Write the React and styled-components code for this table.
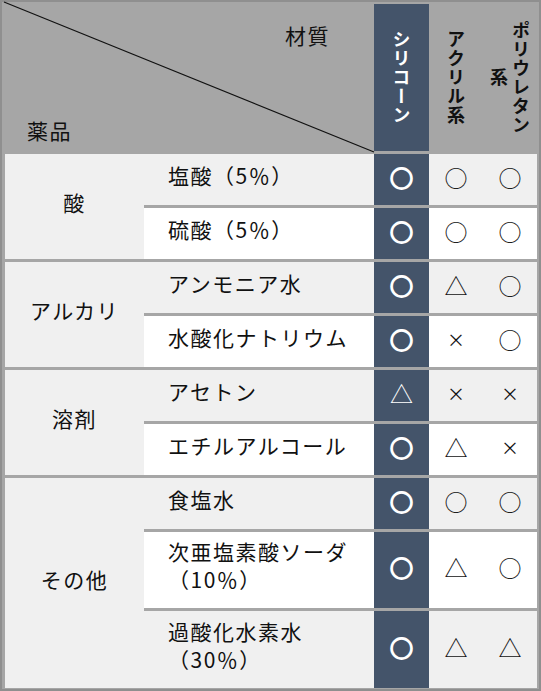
import React from 'react';
import styled, { createGlobalStyle } from 'styled-components';

const Global = createGlobalStyle`
  html, body { margin: 0; padding: 0; background: #a6a6a6; }
  body { font-family: "Noto Sans CJK JP", "Noto Sans", sans-serif; color: #111; }
`;

const Frame = styled.div`
  box-sizing: border-box;
  width: 541px;
  height: 691px;
  border: 2px solid #8f8f8f;
  padding: 2px 2px 1px 3px;
  background: #a6a6a6;
`;

const Grid = styled.div`
  display: grid;
  grid-template-columns: 139px 230px 55px 54px 54px;
  grid-template-rows: 147px repeat(7, 51px) 76px 77px;
  row-gap: 3px;
  height: 100%;
`;

const Corner = styled.div`
  grid-column: 1 / 3;
  position: relative;
  display: flex;
  flex-direction: column;
  justify-content: space-between;
  padding: 18px 44px 8px 22px;
  font-size: 21px;
  letter-spacing: 1.5px;
  line-height: 26px;
`;

const CornerLabel = styled.span`
  align-self: ${(p) => (p.$end ? 'flex-end' : 'flex-start')};
`;

const Diagonal = styled.svg`
  position: absolute;
  top: -2px;
  left: -1px;
  width: calc(100% + 1px);
  height: calc(100% + 3px);
  overflow: visible;
  pointer-events: none;
`;

const MatHead = styled.div`
  display: flex;
  align-items: center;
  justify-content: center;
  background: ${(p) => (p.$dark ? '#44546a' : 'transparent')};
  color: ${(p) => (p.$dark ? '#ffffff' : '#111')};
`;

const VText = styled.span`
  writing-mode: vertical-rl;
  text-align: center;
  font-weight: 700;
  font-size: 18px;
  line-height: 22px;
  letter-spacing: 1px;
`;

const GroupCell = styled.div`
  grid-row: span ${(p) => p.$span};
  background: #f0f0f0;
  display: flex;
  align-items: center;
  justify-content: center;
  padding-bottom: 9px;
  font-size: 21px;
  letter-spacing: 1.5px;
`;

const ItemCell = styled.div`
  background: ${(p) => (p.$white ? '#ffffff' : '#f0f0f0')};
  display: flex;
  flex-direction: column;
  justify-content: center;
  padding: 0 0 10px 24px;
  font-size: 21px;
  letter-spacing: 1.5px;
  line-height: 28px;
`;

const MarkCell = styled.div`
  background: ${(p) => (p.$dark ? '#44546a' : p.$white ? '#ffffff' : '#f0f0f0')};
  color: ${(p) => (p.$dark ? '#ffffff' : '#111')};
  display: flex;
  align-items: center;
  justify-content: center;
  padding-bottom: 5px;
  line-height: 1;
`;

const Mark = styled.span`
  font-size: ${(p) => (p.$kind === '×' ? '18px' : '23px')};
  -webkit-text-stroke: ${(p) => (p.$heavy ? '1.8px currentColor' : '0')};
`;

const groups = [
  {
    name: '酸',
    items: [
      [['塩酸（5％）'], ['○', '○', '○']],
      [['硫酸（5％）'], ['○', '○', '○']],
    ],
  },
  {
    name: 'アルカリ',
    items: [
      [['アンモニア水'], ['○', '△', '○']],
      [['水酸化ナトリウム'], ['○', '×', '○']],
    ],
  },
  {
    name: '溶剤',
    items: [
      [['アセトン'], ['△', '×', '×']],
      [['エチルアルコール'], ['○', '△', '×']],
    ],
  },
  {
    name: 'その他',
    items: [
      [['食塩水'], ['○', '○', '○']],
      [['次亜塩素酸ソーダ', '（10％）'], ['○', '△', '○']],
      [['過酸化水素水', '（30％）'], ['○', '△', '△']],
    ],
  },
];

export default function App() {
  return (
    <>
      <Global />
      <Frame>
        <Grid>
          <Corner>
            <Diagonal>
              <line x1="0" y1="0" x2="100%" y2="100%" stroke="#111" strokeWidth="1.2" />
            </Diagonal>
            <CornerLabel $end>材質</CornerLabel>
            <CornerLabel>薬品</CornerLabel>
          </Corner>
          <MatHead $dark>
            <VText>シリコーン</VText>
          </MatHead>
          <MatHead>
            <VText>アクリル系</VText>
          </MatHead>
          <MatHead>
            <VText>
              ポリウレタン
              <br />系
            </VText>
          </MatHead>
          {groups.map((g) => (
            <React.Fragment key={g.name}>
              <GroupCell $span={g.items.length}>{g.name}</GroupCell>
              {g.items.map(([lines, marks], i) => {
                const white = i % 2 === 1;
                return (
                  <React.Fragment key={lines[0]}>
                    <ItemCell $white={white}>
                      {lines.map((l) => (
                        <span key={l}>{l}</span>
                      ))}
                    </ItemCell>
                    {marks.map((m, j) => (
                      <MarkCell key={j} $dark={j === 0} $white={white}>
                        <Mark $kind={m} $heavy={j === 0 && m === '○'}>
                          {m}
                        </Mark>
                      </MarkCell>
                    ))}
                  </React.Fragment>
                );
              })}
            </React.Fragment>
          ))}
        </Grid>
      </Frame>
    </>
  );
}
